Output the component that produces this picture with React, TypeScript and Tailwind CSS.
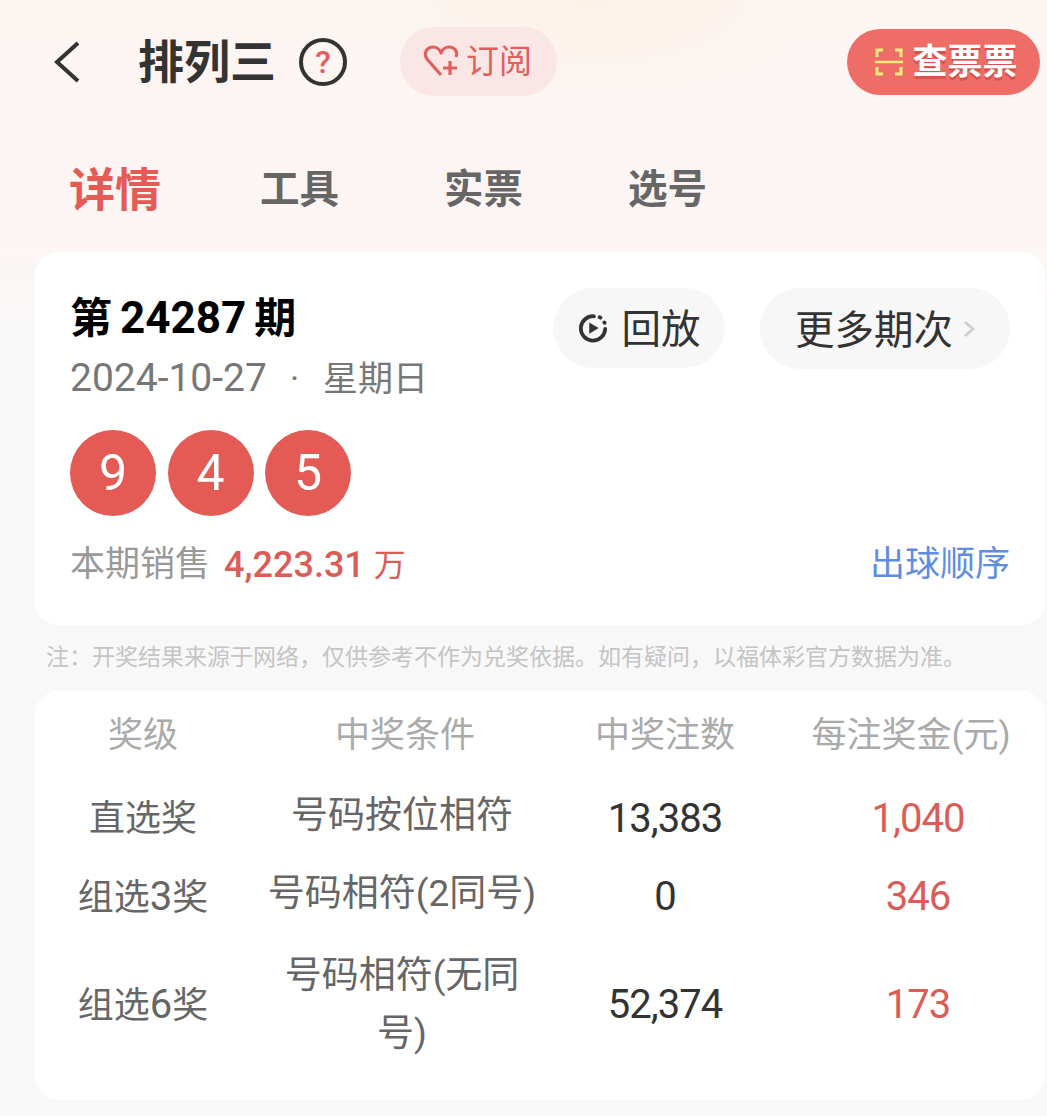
import React from "react";

const ROWS = [
  { pre: "直选", digit: "", cond: "号码按位相符", count: "13,383", prize: "1,040" },
  { pre: "组选", digit: "3", cond: "号码相符(2同号)", count: "0", prize: "346" },
  { pre: "组选", digit: "6", cond: "号码相符(无同号)", count: "52,374", prize: "173" },
];

const NOTE = "注\uFF1A开奖结果来源于网络\uFF0C仅供参考不作为兑奖依据。如有疑问\uFF0C以福体彩官方数据为准。";

const FONT = "font-['Roboto','Noto_Sans_CJK_SC',sans-serif]";
const COLS = "grid grid-cols-[216px_302px_224px_268px] items-center pt-[4px] text-center";

function HeartPlus() {
  return (
    <svg width="38" height="36" viewBox="0 0 38 36" fill="none" stroke="#e2605b" strokeWidth="3.2">
      <path d="M19 31 L5 15 C1 9 5 3 11 3 C15 3 18 6 19 9 C20 6 23 3 27 3 C33 3 36 8 34 13" strokeLinejoin="round" />
      <path d="M28 17 V31 M21 24 H35" />
    </svg>
  );
}

function ScanIcon() {
  return (
    <svg width="28" height="28" viewBox="0 0 28 28" fill="none" stroke="#fdeb7a" strokeWidth="3">
      <path d="M2 9 V2 H8 M20 2 H26 V9 M2 19 V26 H8 M20 26 H26 V19" />
      <path d="M0 14 H28" strokeWidth="2.5" />
    </svg>
  );
}

function ReplayIcon() {
  return (
    <svg width="30" height="30" viewBox="0 0 32 32" fill="none" stroke="#333" strokeWidth="4">
      <path d="M17 3.5 A13 13 0 1 0 29 17" strokeLinecap="round" />
      <path d="M23 4.5 L24 5 M28 10 L28.5 10.5" strokeLinecap="round" />
      <path d="M12 10 L22 16 L12 22 Z" fill="#333" stroke="none" />
    </svg>
  );
}

export default function App() {
  return (
    <div className={`${FONT} h-[1116px] overflow-hidden bg-[radial-gradient(ellipse_240px_100px_at_590px_0px,#fdf2e8,transparent),linear-gradient(180deg,#fcf5f2_0px,#fdf5f4_220px,#f9f8f8_330px)]`}>
      {/* 顶部栏 */}
      <div className="flex h-[96px] items-center pt-[27px] pl-[53px] pr-[7px]">
        <svg width="28" height="44" viewBox="0 0 28 44" fill="none" stroke="#333" strokeWidth="4">
          <path d="M25 3 L4 22 L25 41" />
        </svg>
        <div className="ml-[57px] w-[139px] text-[46px] leading-none font-bold text-[#333]">排列三</div>
        <div className="ml-[22px] flex h-[48px] w-[48px] items-center justify-center rounded-full border-[4px] border-[#333] text-[32px] font-medium text-[#e2605b]">
          ?
        </div>
        <div className="ml-[53px] flex h-[69px] w-[157px] items-center justify-center gap-[6px] rounded-[34px] bg-[#fbe6e6] pr-[3px] text-[33px] text-[#e2605b]">
          <HeartPlus />
          <span>订阅</span>
        </div>
        <div className="ml-auto flex h-[66px] w-[193px] items-center justify-center gap-[9px] rounded-[33px] bg-[#ee6d66] pl-[6px] text-[35px] font-bold text-white">
          <ScanIcon />
          <span className="mt-[4px] [text-shadow:0_3px_0_#d9534e]">查票票</span>
        </div>
      </div>

      {/* 标签 */}
      <div className="mt-[62px] flex h-[64px] items-center pl-[69px] font-bold text-[#666]">
        <div className="w-[191px] text-[46px] text-[#e45b56]">详情</div>
        <div className="w-[184px] text-[39.5px]">工具</div>
        <div className="w-[184px] text-[39.5px]">实票</div>
        <div className="text-[39.5px]">选号</div>
      </div>

      {/* 开奖信息 */}
      <div className="mt-[30px] ml-[35px] mr-[2px] h-[373px] rounded-[24px] bg-white px-[35px] pt-[36px]">
        <div className="flex justify-between">
          <div>
            <div className="flex h-[60px] items-center gap-[8px] text-[42px] font-bold text-black">
              <span>第</span>
              <span className="text-[44px]">24287</span>
              <span>期</span>
            </div>
            <div className="mt-[5px] h-[50px] text-[35px] leading-[50px] text-[#777]">
              <span className="text-[39px]">2024-10-27</span>
              <span className="ml-[23px] mr-[24px]">·</span>星期日
            </div>
          </div>
          <div className="flex items-start gap-[35px]">
            <div className="flex h-[80px] w-[172px] items-center justify-center gap-[14px] rounded-[40px] bg-[#f7f7f7] text-[39.5px] text-[#333]">
              <ReplayIcon />
              <span className="mt-[4px]">回放</span>
            </div>
            <div className="flex h-[81px] w-[250px] items-center justify-center gap-[10px] rounded-[40px] bg-[#f7f7f7] text-[39.5px] text-[#333]">
              <span className="mt-[4px]">更多期次</span>
              <svg width="12" height="18" viewBox="0 0 12 18" fill="none" stroke="#ccc" strokeWidth="2.5">
                <path d="M2 2 L10 9 L2 16" />
              </svg>
            </div>
          </div>
        </div>
        <div className="mt-[27px] flex gap-[11.5px]">
          {["9", "4", "5"].map((n) => (
            <div key={n} className="flex h-[86px] w-[86px] items-center justify-center rounded-full bg-[#e45b56] text-[50px] text-white">
              {n}
            </div>
          ))}
        </div>
        <div className="mt-[22px] flex h-[51px] items-center justify-between pt-[3px]">
          <div className="flex items-center text-[35px]">
            <span className="text-[#999]">本期销售</span>
            <span className="ml-[14px] text-[36px] font-medium text-[#dc5c58]">4,223.31</span>
            <span className="ml-[9px] text-[32px] text-[#dc5c58]">万</span>
          </div>
          <span className="text-[35px] text-[#5f8ee0]">出球顺序</span>
        </div>
      </div>

      <div className="mt-[20px] ml-[46px] text-[23px] leading-[26px] whitespace-nowrap text-[#c4c4c4]">{NOTE}</div>

      {/* 奖级表格 */}
      <div className="mt-[20px] ml-[35px] mr-[2px] h-[409px] rounded-[24px] bg-white">
        <div className={`${COLS} h-[87px] text-[35px] text-[#aaa]`}>
          <div>奖级</div>
          <div className="pl-[6px]">中奖条件</div>
          <div>中奖注数</div>
          <div>每注奖金(元)</div>
        </div>
        {ROWS.map((r, i) => (
          <div key={r.cond} className={`${COLS} ${i === 2 ? "h-[138px]" : "h-[78px]"} text-[36px] text-[#666]`}>
            <div>
              {r.pre}
              {r.digit && <span className="text-[40px]">{r.digit}</span>}奖
            </div>
            <div className={`px-[16px] text-[37px] leading-[58px] ${i === 2 ? "" : "mb-[6px]"}`}>{r.cond}</div>
            <div className="text-[40px] tracking-[-1px] text-[#333]">{r.count}</div>
            <div className="pl-[14px] text-[40px] tracking-[-1px] text-[#dc5c58]">{r.prize}</div>
          </div>
        ))}
      </div>
    </div>
  );
}
